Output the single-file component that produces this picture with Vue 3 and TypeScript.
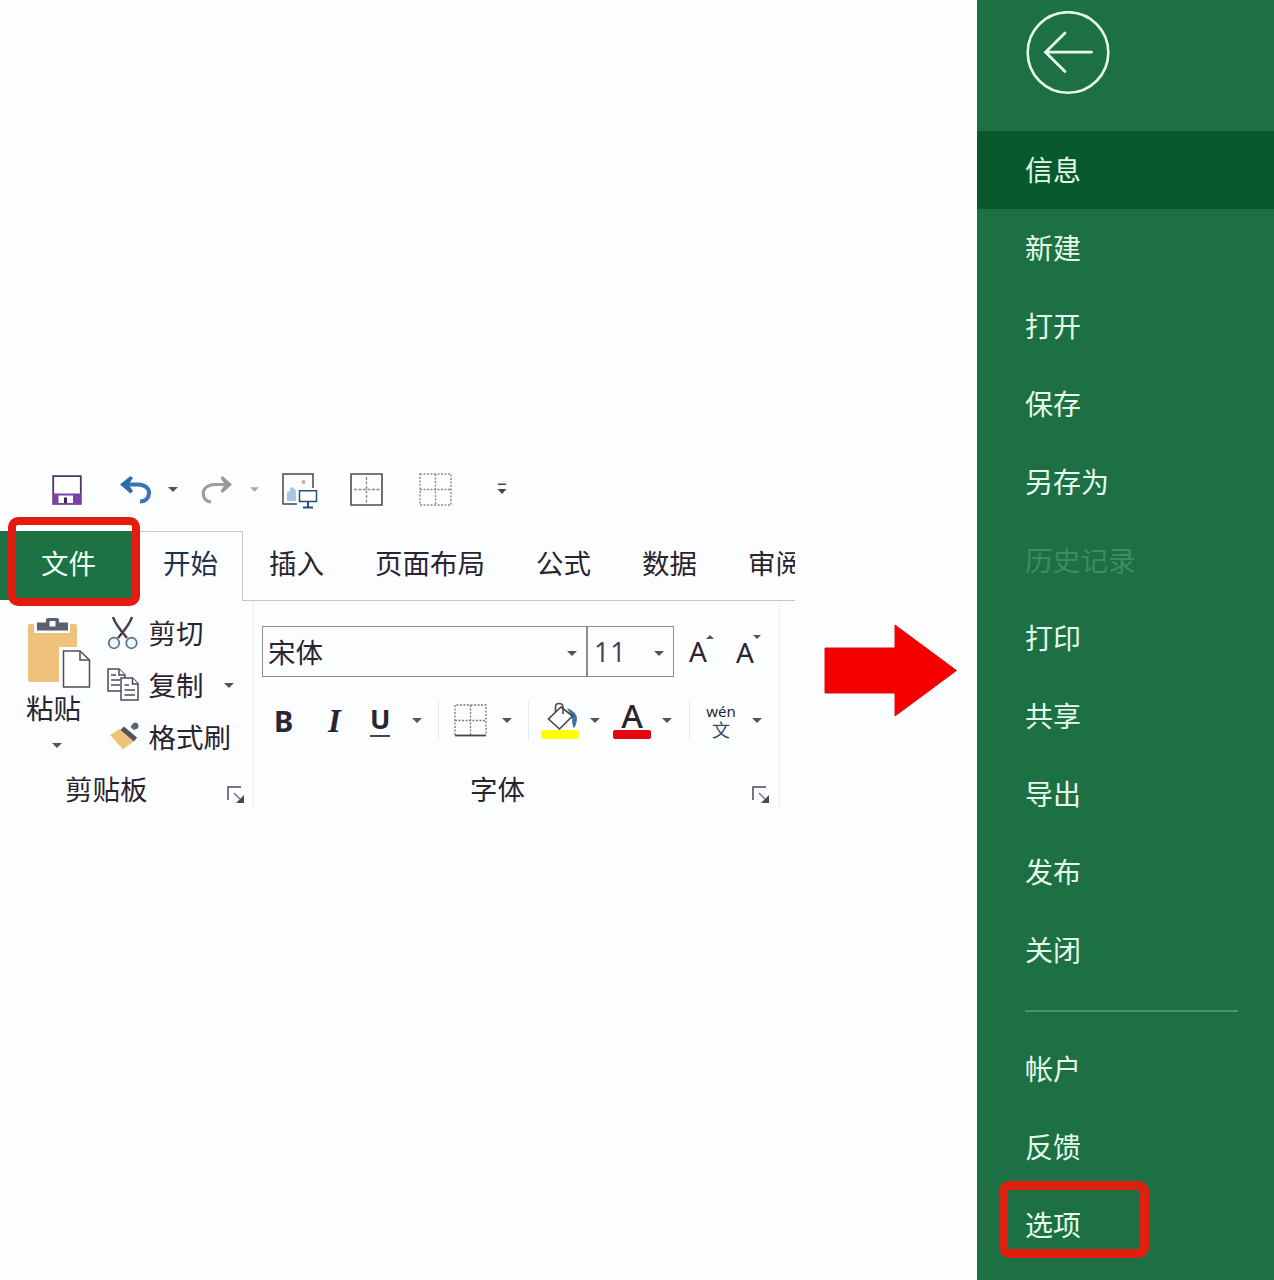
<script setup lang="ts">
interface MenuItem {
  label: string
  state?: 'active' | 'disabled' | 'marked'
}

const tabs: { label: string; left: number }[] = [
  { label: '插入', left: 26 },
  { label: '页面布局', left: 51 },
  { label: '公式', left: 51 },
  { label: '数据', left: 51 },
  { label: '审阅', left: 51 },
]

const mainItems: MenuItem[] = [
  { label: '信息', state: 'active' },
  { label: '新建' },
  { label: '打开' },
  { label: '保存' },
  { label: '另存为' },
  { label: '历史记录', state: 'disabled' },
  { label: '打印' },
  { label: '共享' },
  { label: '导出' },
  { label: '发布' },
  { label: '关闭' },
]

const footerItems: MenuItem[] = [
  { label: '帐户' },
  { label: '反馈' },
  { label: '选项', state: 'marked' },
]
</script>

<template>
  <div class="page">
    <main class="workspace">
      <section class="ribbon">
        <div class="quick-access">
          <svg class="save" width="30" height="30" viewBox="0 0 30 30">
            <path d="M1.200 1.200H28.800V28.800H1.200Z" fill="#fdfdff" stroke="#4f3568" stroke-width="1.800" />
            <path d="M1 18.500H29V29H1Z" fill="#7d3fa8" />
            <path d="M6.500 20.500H21V28H6.500Z" fill="#fff" />
            <path d="M12 22.500H15V28H12Z" fill="#3d2358" />
          </svg>
          <svg class="undo" width="34" height="28" viewBox="0 0 34 28">
            <path d="M6 8.500H19C27 9 30.500 13 30 17.500C29.500 22.500 26 25.500 21 25.500" fill="none" stroke="#3a74b8" stroke-width="4" />
            <path d="M1 8.500L11.500 0L14 2L9.500 8.500L14 15L11.500 17.500Z" fill="#2f6ab0" />
          </svg>
          <svg class="caret c1" width="10" height="5" viewBox="0 0 10 5"><path d="M0 0H10L5 5Z" /></svg>
          <svg class="redo" width="32" height="28" viewBox="0 0 32 28">
            <path d="M27 8.500H14C6 9 2 13 2.300 18C2.600 23 6 25.500 10 26" fill="none" stroke="#9d9da1" stroke-width="3.200" />
            <path d="M31 8.500L21.500 0L19.500 2L24 8.500L19.500 15L21.500 17Z" fill="#97979b" />
          </svg>
          <svg class="caret c2" width="9" height="5" viewBox="0 0 10 5"><path d="M0 0H10L5 5Z" /></svg>
          <svg class="picture" width="36" height="36" viewBox="0 0 36 36">
            <path d="M31 15V1H1V31H15" fill="none" stroke="#45454f" stroke-width="1.500" />
            <circle cx="21.500" cy="9" r="2" fill="#e0a58c" />
            <path d="M5 28V19L8 18V15L11 14L14 18V28Z" fill="#a9c7e3" />
            <path d="M17.500 17.800H34.500V28.500H17.500Z" fill="#fff" stroke="#255078" stroke-width="1.500" />
            <path d="M26 29V34M21 34.500H31" stroke="#255078" stroke-width="2" />
          </svg>
          <svg class="grid" width="33" height="33" viewBox="0 0 33 33">
            <path d="M1 1H32V32H1Z" fill="none" stroke="#4b4b55" stroke-width="1.600" />
            <path d="M16.500 4V30M4 16.500H30" stroke="#88888f" stroke-width="1.300" stroke-dasharray="3 1.500" />
          </svg>
          <svg class="dots" width="33" height="33" viewBox="0 0 33 33">
            <path d="M1 1H32V32H1ZM16.500 1V32M1 16.500H32" fill="none" stroke="#88888f" stroke-width="1.400" stroke-dasharray="2 1.500" />
          </svg>
          <svg class="more" width="10" height="12" viewBox="0 0 10 12">
            <path d="M1 0.500H9V2H1ZM0.500 6H9.500L5 11Z" fill="#44444c" />
          </svg>
        </div>

        <nav class="tabs">
          <div class="tab-file">文件<span class="file-mark"></span></div>
          <div class="tab-home">开始</div>
          <div class="tab-rest">
            <span v-for="t in tabs" :key="t.label" class="tab" :style="{ marginLeft: t.left + 'px' }">{{ t.label }}</span>
          </div>
        </nav>

        <div class="groups">
          <div class="group clipboard">
            <div class="clip-body">
              <div class="paste">
                <svg width="66" height="72" viewBox="0 0 66 72">
                  <path d="M4 8H49Q51 8 51 10V31H36V66H4Q2 66 2 64V10Q2 8 4 8Z" fill="#eec27a" />
                  <path d="M8 4H44V17H8Z" fill="#fcfdff" />
                  <path d="M11 6.500H20V4Q20 2 22 2H31Q33 2 33 4V6.500H42V14.500H11Z" fill="#5b5f70" />
                  <path d="M23.500 5H29.500V10.500H23.500Z" fill="#fff" />
                  <path d="M33 31H53V40H50V66H36V71H33Z" fill="#fcfdff" />
                  <path d="M37.500 35H54L63.500 44V71H37.500Z" fill="#fff" stroke="#4e4e58" stroke-width="1.500" />
                  <path d="M54 35V44H63" fill="none" stroke="#4e4e58" stroke-width="1.500" />
                </svg>
                <span class="paste-label">粘贴</span>
                <svg class="caret" width="10" height="5" viewBox="0 0 10 5"><path d="M0 0H10L5 5Z" /></svg>
              </div>
              <div class="clip-actions">
                <div class="action">
                  <svg width="32" height="34" viewBox="0 0 32 34">
                    <path d="M6 1Q8 8 20 22M25 1Q23 8 11 22" stroke="#4b4048" stroke-width="2.600" fill="none" />
                    <circle cx="7" cy="27" r="5.300" fill="#eef6fd" stroke="#52728c" stroke-width="1.700" />
                    <circle cx="24.500" cy="27" r="5.300" fill="#eef6fd" stroke="#52728c" stroke-width="1.700" />
                  </svg>
                  <span>剪切</span>
                </div>
                <div class="action">
                  <svg width="32" height="34" viewBox="0 0 32 34">
                    <g fill="#fff" stroke="#4b4b58" stroke-width="1.500">
                      <path d="M1 1H12L18 7V23H1Z" />
                      <path d="M12 1V7H18M4 7H9M4 12H13M4 17H13" />
                      <path d="M14 10H25.500L31 15.500V32H14Z" />
                      <path d="M25.500 10V16H31M17.500 17H22M17.500 22H28M17.500 27H28" />
                    </g>
                  </svg>
                  <span>复制</span>
                  <svg class="caret copy-caret" width="10" height="5" viewBox="0 0 10 5"><path d="M0 0H10L5 5Z" /></svg>
                </div>
                <div class="action">
                  <svg width="32" height="34" viewBox="0 0 32 34">
                    <path d="M3 15L13 9L27 21L16 29.500Z" fill="#eec27a" />
                    <path d="M17 6.500L30 17.500L27 21.500L13.500 10Z" fill="#55525c" />
                    <path d="M23.500 7L26 3.500Q28.500 1.500 30.500 3.500Q32.500 6 30.500 8.500L27 10Z" fill="#5b6374" />
                  </svg>
                  <span>格式刷</span>
                </div>
              </div>
            </div>
            <div class="group-foot">
              <span class="clip-title">剪贴板</span>
              <svg class="launcher" width="18" height="18" viewBox="0 0 18 18">
                <path d="M1 14V1H14" fill="none" stroke="#4c4853" stroke-width="1.500" />
                <path d="M7 7L13 13" stroke="#77737c" stroke-width="1.500" />
                <path d="M17 9V17H9Z" fill="#4c4853" />
              </svg>
            </div>
          </div>

          <div class="group font">
            <div class="font-row">
              <div class="combo family"><span>宋体</span><svg class="caret" width="10" height="5" viewBox="0 0 10 5"><path d="M0 0H10L5 5Z" /></svg></div>
              <div class="combo size"><span>11</span><svg class="caret" width="10" height="5" viewBox="0 0 10 5"><path d="M0 0H10L5 5Z" /></svg></div>
              <span class="resize grow">A</span>
              <svg class="caret tip" width="8" height="4" viewBox="0 0 8 4"><path d="M0 4H8L4 0Z" /></svg>
              <span class="resize shrink">A</span>
              <svg class="caret tip" width="8" height="4" viewBox="0 0 8 4"><path d="M0 0H8L4 4Z" /></svg>
            </div>
            <div class="format-row">
              <span class="fmt bold">B</span>
              <span class="fmt italic">I</span>
              <span class="fmt under">U</span>
              <svg class="caret u-caret" width="10" height="5" viewBox="0 0 10 5"><path d="M0 0H10L5 5Z" /></svg>
              <i class="sep s1"></i>
              <svg class="border-icon" width="33" height="33" viewBox="0 0 33 33">
                <path d="M1 31V1H32V31M16.500 1V31M1 16.500H32" fill="none" stroke="#77777f" stroke-width="1.300" stroke-dasharray="2 1.500" />
                <path d="M1 31.500H32" stroke="#45454e" stroke-width="1.800" />
              </svg>
              <svg class="caret b-caret" width="10" height="5" viewBox="0 0 10 5"><path d="M0 0H10L5 5Z" /></svg>
              <i class="sep s2"></i>
              <svg class="fill-icon" width="38" height="38" viewBox="0 0 38 38">
                <path d="M26 6Q36 10 36 17Q35.500 23 33 26Q31 24 31 15Z" fill="#3e71a8" />
                <path d="M20 5L31.500 14L18.500 27L7.500 17Z" fill="#fff" stroke="#45454f" stroke-width="1.600" />
                <path d="M14.500 10V5Q14.500 1.500 18 1.500Q22 1.500 22 5V12" fill="none" stroke="#584850" stroke-width="1.600" />
                <rect x="0" y="28" width="38" height="9" rx="3" fill="#ff0" />
              </svg>
              <svg class="caret f-caret" width="10" height="5" viewBox="0 0 10 5"><path d="M0 0H10L5 5Z" /></svg>
              <div class="color-a"><span>A</span><i></i></div>
              <svg class="caret a-caret" width="10" height="5" viewBox="0 0 10 5"><path d="M0 0H10L5 5Z" /></svg>
              <i class="sep s3"></i>
              <div class="phonetic"><span class="wen">wén</span><span class="zi">文</span></div>
              <svg class="caret p-caret" width="10" height="5" viewBox="0 0 10 5"><path d="M0 0H10L5 5Z" /></svg>
            </div>
            <div class="group-foot">
              <span class="font-title">字体</span>
              <svg class="launcher" width="18" height="18" viewBox="0 0 18 18">
                <path d="M1 14V1H14" fill="none" stroke="#4c4853" stroke-width="1.500" />
                <path d="M7 7L13 13" stroke="#77737c" stroke-width="1.500" />
                <path d="M17 9V17H9Z" fill="#4c4853" />
              </svg>
            </div>
          </div>
        </div>
      </section>

      <svg class="arrow" width="134" height="94" viewBox="0 0 134 94">
        <path d="M1 24H71V1L132.500 46.500L71 92V69H1Z" fill="#f80000" stroke="#d80f0f" stroke-width="1" />
      </svg>
    </main>

    <aside class="backstage">
      <svg class="back" width="84" height="84" viewBox="0 0 84 84" fill="none" stroke="#e6fbec">
        <circle cx="42" cy="41.500" r="40.300" stroke-width="2.600" />
        <path d="M65.500 41.200H20.500M39 22L19.500 41.200L39 60.500" stroke-width="2.800" stroke-linecap="round" />
      </svg>
      <ul class="menu">
        <li v-for="m in mainItems" :key="m.label" :class="m.state">{{ m.label }}</li>
      </ul>
      <hr class="divider" />
      <ul class="menu">
        <li v-for="m in footerItems" :key="m.label" :class="m.state">{{ m.label }}</li>
      </ul>
    </aside>
  </div>
</template>

<style>
body {
  margin: 0;
}
</style>

<style scoped>
.page {
  display: flex;
  width: 1274px;
  height: 1280px;
  overflow: hidden;
  background: #fcfdff;
  color: #2a2430;
  font-family: "Noto Sans CJK SC", "Noto Sans", sans-serif;
  font-size: 27.5px;
  line-height: 40px;
}
svg {
  display: block;
  flex: none;
}
.workspace {
  display: flex;
  align-items: flex-start;
  width: 977px;
  flex: none;
}
.ribbon {
  width: 795px;
  margin-top: 466px;
  flex: none;
}
.caret {
  fill: #55525a;
}

.quick-access {
  display: flex;
  align-items: center;
  height: 47px;
  padding-left: 52px;
  margin-bottom: 18px;
}
.undo { margin-left: 37px; }
.c1 { margin-left: 15px; }
.redo { margin-left: 23px; }
.c2 { margin-left: 17px; fill: #a8a8ae; }
.picture { margin-left: 23px; margin-top: 2px; }
.grid { margin-left: 32px; }
.dots { margin-left: 36px; }
.more { margin-left: 45px; margin-bottom: 2px; }

.tabs {
  display: flex;
  height: 70px;
  line-height: 63px;
  white-space: nowrap;
}
.tab-file {
  position: relative;
  box-sizing: border-box;
  width: 138px;
  height: 69px;
  padding-left: 41px;
  background: #1c7244;
  color: #effff4;
  flex: none;
}
.file-mark {
  position: absolute;
  left: 8px;
  top: -14px;
  box-sizing: border-box;
  width: 132px;
  height: 89px;
  border: 8px solid #e41c10;
  border-radius: 10px;
}
.tab-home {
  box-sizing: border-box;
  width: 105px;
  padding-left: 25px;
  border-top: 1px solid #c3c4cb;
  border-right: 1px solid #c3c4cb;
  color: #22304a;
  line-height: 61px;
  flex: none;
}
.tab-rest {
  display: flex;
  box-sizing: border-box;
  width: 552px;
  overflow: hidden;
  border-bottom: 1px solid #c3c4cb;
}
.tab {
  flex: none;
}

.groups {
  display: flex;
  height: 208px;
}
.group {
  display: flex;
  flex-direction: column;
  box-sizing: border-box;
  border-right: 1px solid #eceef4;
}
.clipboard {
  width: 254px;
}
.clip-body {
  display: flex;
  height: 162px;
}
.paste {
  display: flex;
  flex-direction: column;
  width: 81px;
  padding: 15px 0 0 26px;
}
.paste-label {
  margin-top: -1px;
}
.paste .caret {
  margin: 16px 0 0 26px;
}
.clip-actions {
  padding-top: 6px;
}
.action {
  display: flex;
  align-items: center;
  height: 52px;
}
.action span {
  margin: -2px 0 0 9.5px;
}
.copy-caret {
  margin-left: 20px;
}
.group-foot {
  display: flex;
  height: 46px;
  line-height: 51px;
}
.clip-title { width: 162px; margin-left: 65px; }
.font-title { width: 282px; margin-left: 216px; }
.launcher {
  margin-top: 23px;
}

.font {
  width: 526px;
}
.font-row {
  display: flex;
  height: 51px;
  margin: 25px 0 0 8px;
}
.combo {
  display: flex;
  align-items: center;
  justify-content: space-between;
  box-sizing: border-box;
  border: 1px solid #8b8b93;
}
.combo .caret {
  margin-top: 3px;
}
.family {
  width: 325px;
  padding: 0 9px 0 5px;
}
.family span {
  margin-top: -2px;
}
.size {
  width: 87px;
  padding: 0 9px 0 6px;
  font-family: "Noto Sans", sans-serif;
}
.size span {
  color: #45404c;
  font-family: "Open Sans", "Noto Sans", sans-serif;
  font-size: 27px;
  letter-spacing: 0.8px;
}
.resize {
  width: 17px;
  font: 28px/50px "Noto Sans", sans-serif;
}
.grow { margin-left: 15px; }
.shrink { margin-left: 22px; line-height: 53px; }
.tip {
  margin: 9px 0 0 0;
}
.format-row {
  display: flex;
  align-items: center;
  height: 86px;
  padding-top: 1px;
  box-sizing: border-box;
}
.fmt {
  font: bold 29px/40px "Noto Sans", sans-serif;
}
.bold { width: 54px; margin-left: 20px; }
.italic { width: 42px; font-family: "Liberation Serif", serif; font-style: italic; font-size: 33px; }
.under {
  width: 20px;
  height: 31px;
  font-size: 27px;
  line-height: 29px;
  text-align: center;
  border-bottom: 2px solid #44424c;
}
.u-caret { margin-left: 22px; }
.sep {
  width: 1px;
  height: 40px;
  background: #e6e8ee;
}
.s1 { margin-left: 16px; }
.border-icon { margin-left: 15px; }
.b-caret { margin-left: 15px; }
.s2 { margin-left: 16px; }
.fill-icon { margin-left: 12px; }
.f-caret { margin-left: 11px; }
.color-a {
  display: flex;
  flex-direction: column;
  align-items: center;
  width: 38px;
  height: 38px;
  margin-left: 13px;
}
.color-a span {
  height: 28px;
  font: 500 33px/27px "Noto Sans", sans-serif;
}
.color-a i {
  width: 38px;
  height: 9px;
  border-radius: 2px;
  background: #e60510;
}
.a-caret { margin-left: 11px; }
.s3 { margin-left: 17px; }
.phonetic {
  display: flex;
  flex-direction: column;
  align-items: center;
  width: 30px;
  margin-left: 16px;
}
.wen {
  font: 15px/17px "Noto Sans", sans-serif;
}
.zi {
  font-size: 18px;
  line-height: 19px;
  color: #344764;
}
.p-caret { margin-left: 16px; }

.arrow {
  margin: 624px 0 0 29px;
}

.backstage {
  width: 297px;
  height: 1280px;
  background: #1d7044;
  color: #e6fbec;
  font-size: 28px;
  flex: none;
}
.back {
  margin: 11px 0 0 49px;
}
.menu {
  margin: 0;
  padding: 0;
  list-style: none;
}
.back + .menu {
  margin-top: 36px;
}
.menu li {
  position: relative;
  box-sizing: border-box;
  height: 78px;
  padding-left: 48px;
  line-height: 76px;
}
.menu .active {
  background: #08592c;
}
.menu .disabled {
  color: #438961;
  font-size: 27.7px;
}
.marked::after {
  content: "";
  position: absolute;
  left: 22px;
  top: -5px;
  box-sizing: border-box;
  width: 150px;
  height: 77px;
  border: 9px solid #df1f10;
  border-radius: 11px;
}
.divider {
  width: 213px;
  height: 2px;
  margin: 21px 0 18px 48px;
  border: 0;
  background: #4b9169;
}
</style>
